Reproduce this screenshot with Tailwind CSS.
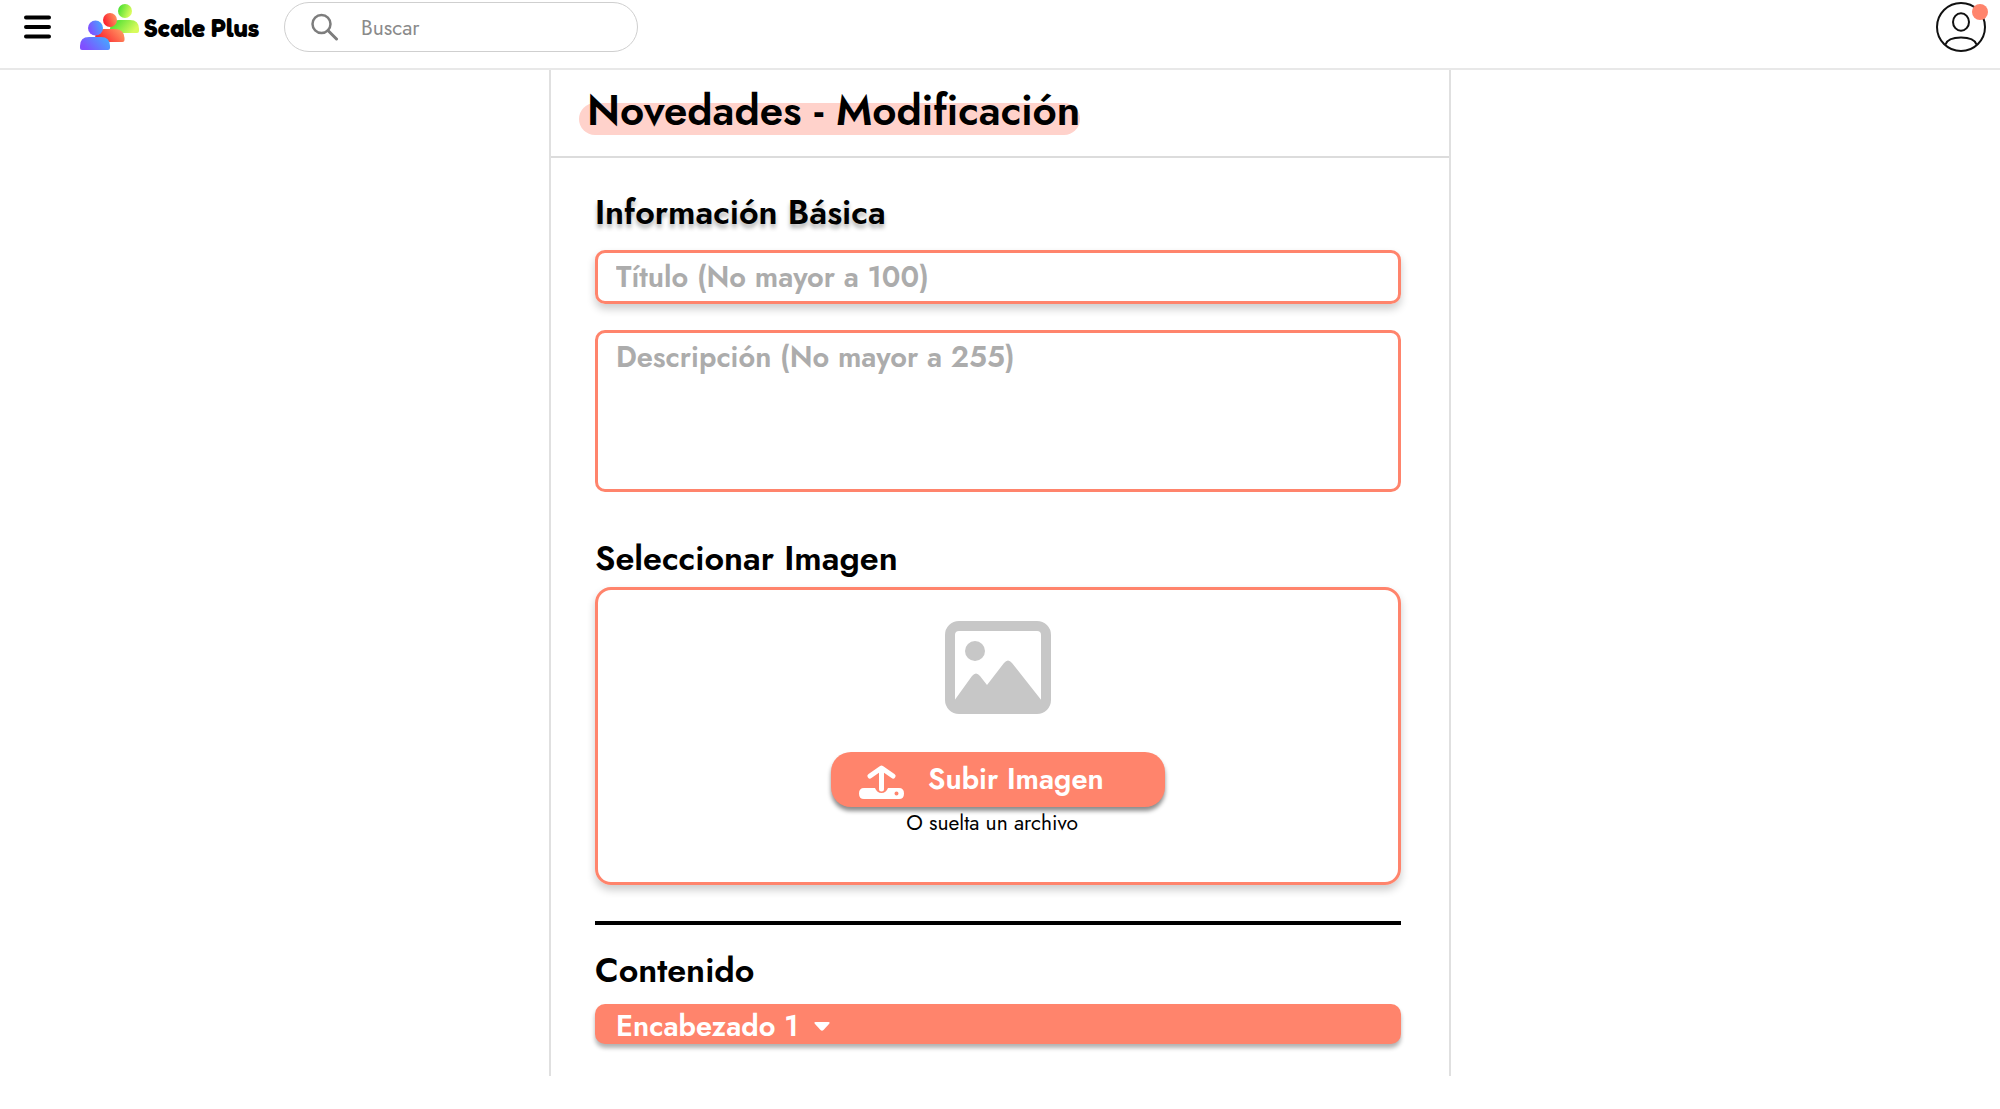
<!DOCTYPE html>
<html lang="es">
<head>
<meta charset="utf-8">
<meta name="viewport" content="width=device-width, initial-scale=1">
<title>Novedades - Modificación</title>
<script src="https://cdn.jsdelivr.net/npm/@tailwindcss/browser@4"></script>
</head>
<body class="min-h-screen bg-white font-[Jost,Lato,sans-serif] text-black">
<header class="flex h-[70px] items-center border-b-2 border-[#e8e8e8] pr-3.5 pb-3.5 pl-6">
  <button type="button" aria-label="Abrir menú" class="shrink-0">
    <svg class="block h-6 w-7" viewBox="0 0 28 24" fill="none" stroke="#000" stroke-width="4" stroke-linecap="round"><path d="M2 2.500h23M2 12h23M2 21.500h23"/></svg>
  </button>
  <a href="#" class="ml-7 flex w-[182px] shrink-0 items-center gap-1">
    <svg class="block h-[47px] w-[60px] shrink-0" viewBox="0 0 60 47" aria-hidden="true">
      <defs>
        <linearGradient id="green" x1="0" x2="1" y2=".4"><stop offset="0" stop-color="#35dc2c"/><stop offset="1" stop-color="#d8fb5c"/></linearGradient>
        <linearGradient id="red" x1="0" x2="1" y1=".4" y2="0"><stop offset="0" stop-color="#fb2530"/><stop offset="1" stop-color="#ffa467"/></linearGradient>
        <linearGradient id="blue" x1="0" x2="1" y1=".4" y2="0"><stop offset="0" stop-color="#8050ff"/><stop offset="1" stop-color="#3fb2ff"/></linearGradient>
      </defs>
      <circle cx="45" cy="7" r="7" fill="url(#green)"/>
      <path d="M30 29V25q0-9 9-9h11q9 0 9 9v2q0 2-2 2z" fill="url(#green)"/>
      <circle cx="30" cy="16" r="7" fill="url(#red)"/>
      <path d="M15 38v-4q0-9 9-9h11q9 0 9.500 9v2q0 2-2 2z" fill="url(#red)"/>
      <circle cx="15.500" cy="24" r="7.500" fill="url(#blue)"/>
      <path d="M0 44v-2q0-9 9-9h12q9 0 9 9v2q0 2-2 2H2q-2 0-2-2z" fill="url(#blue)"/>
    </svg>
    <span class="pt-1 font-['Fredoka_One',Fredoka,Jost,sans-serif] text-[25px] font-bold whitespace-nowrap">Scale Plus</span>
  </a>
  <label class="ml-[22px] flex h-[50px] w-[354px] items-center gap-[22px] rounded-full border border-[#cfcfcf] px-[26px]">
    <svg class="block size-7 shrink-0" viewBox="0 0 28 28" fill="none" stroke="#7d7d7d" stroke-width="2.500" stroke-linecap="round" aria-hidden="true"><circle cx="10.500" cy="11" r="9"/><path d="M17 17.500l8.500 8.500" stroke-width="3"/></svg>
    <input type="search" aria-label="Buscar" placeholder="Buscar" class="min-w-0 flex-1 pt-1 text-[21px] outline-none placeholder:text-[#8a8a8a]">
  </label>
  <button type="button" aria-label="Perfil" class="relative ml-auto shrink-0">
    <svg class="block size-[50px]" viewBox="0 0 50 50" fill="none" stroke="#111" stroke-width="2"><circle cx="25" cy="25" r="24"/><ellipse cx="25" cy="20" rx="8" ry="8.700"/><path d="M9.500 42.500c1.500-4.500 7-7 15.500-7s14 2.500 15.500 7"/></svg>
    <span class="absolute top-0.5 -right-0.5 size-4 rounded-full bg-[#ff846c]"></span>
  </button>
</header>

<main class="mx-auto w-full max-w-[902px] border-x-2 border-[#e0e0e0]">
  <div class="flex h-[88px] items-center border-b-2 border-[#dcdcdc] px-7 pb-1">
    <h1 class="relative isolate pl-2 text-[42px] leading-[56px] font-semibold"><span class="absolute inset-x-0 top-5 -z-10 h-8 rounded-full bg-[#ffd2cb]"></span>Novedades - Modificación</h1>
  </div>
  <form class="pt-[33px] pr-12 pb-8 pl-11">
    <h2 class="text-[34px] leading-[44px] font-semibold text-shadow-[0_4px_4px_rgb(0_0_0/0.3)]">Información Básica</h2>
    <input type="text" aria-label="Título" maxlength="100" placeholder="Título (No mayor a 100)" class="mt-[15px] block h-[54px] w-full rounded-[10px] border-3 border-[#ff846c] px-[18px] text-[29px] font-semibold shadow-[0_5px_8px_rgb(0_0_0/0.2)] outline-none placeholder:text-[#acacac]">
    <textarea aria-label="Descripción" maxlength="255" placeholder="Descripción (No mayor a 255)" class="mt-[26px] block h-[162px] w-full resize-none rounded-[10px] border-3 border-[#ff846c] px-[18px] py-1 text-[29px] leading-[40px] font-semibold outline-none placeholder:text-[#acacac]"></textarea>
    <h2 class="mt-[45px] text-[34px] leading-[44px] font-semibold">Seleccionar Imagen</h2>
    <div class="mt-1.5 flex h-[298px] flex-col items-center rounded-2xl border-3 border-[#ff846c] pt-[31px] shadow-[0_5px_8px_rgb(0_0_0/0.2)]">
      <svg class="block h-[93px] w-[106px]" viewBox="0 0 106 93" aria-hidden="true"><rect x="5" y="5" width="96" height="83" rx="9" fill="none" stroke="#c7c7c7" stroke-width="10"/><circle cx="30" cy="30" r="10" fill="#c7c7c7"/><path d="M9 80l18-25q4-5 8 0l7 9 17-22q4-5 8 0l30 38v6H9z" fill="#c7c7c7"/></svg>
      <button type="button" class="mt-[38px] flex h-[55px] w-[334px] items-center gap-6 rounded-[20px] bg-[#ff846c] pl-7 text-[29px] font-semibold text-white shadow-[0_4px_4px_rgb(0_0_0/0.45)]">
        <svg class="mt-1 block h-[34px] w-[45px]" viewBox="0 0 45 34" aria-hidden="true"><path d="M11 11L22.500 3 34 11M22.500 4v20" fill="none" stroke="#fff" stroke-width="5" stroke-linecap="round" stroke-linejoin="round"/><path fill="#fff" fill-rule="evenodd" d="M5 23h11q2 5 6.500 5t6.500-5h11q5 0 5 5.500t-5 5.500H5q-5 0-5-5.500T5 23zM37.500 26.500a2 2 0 100 4 2 2 0 000-4z"/></svg>
        Subir Imagen
      </button>
      <p class="pr-3 text-[21px] leading-8">O suelta un archivo</p>
    </div>
    <hr class="mt-9 border-t-4 border-black">
    <h2 class="mt-6 text-[34px] leading-[44px] font-semibold">Contenido</h2>
    <div class="relative mt-[11px]">
      <select aria-label="Tipo de contenido" class="block h-10 w-full appearance-none rounded-[10px] bg-[#ff846c] px-[21px] pt-1 text-[29px] leading-9 font-semibold text-white shadow-[0_4px_4px_rgb(0_0_0/0.3)]"><option>Encabezado 1</option></select>
      <svg class="pointer-events-none absolute top-[18px] left-[219px] h-[9px] w-4" viewBox="0 0 16 9" aria-hidden="true"><path d="M1.500 0h13q2 0 .5 2L9.500 8q-1.500 1.500-3 0L1 2Q-.5 0 1.500 0z" fill="#fff"/></svg>
    </div>
  </form>
</main>
</body>
</html>
